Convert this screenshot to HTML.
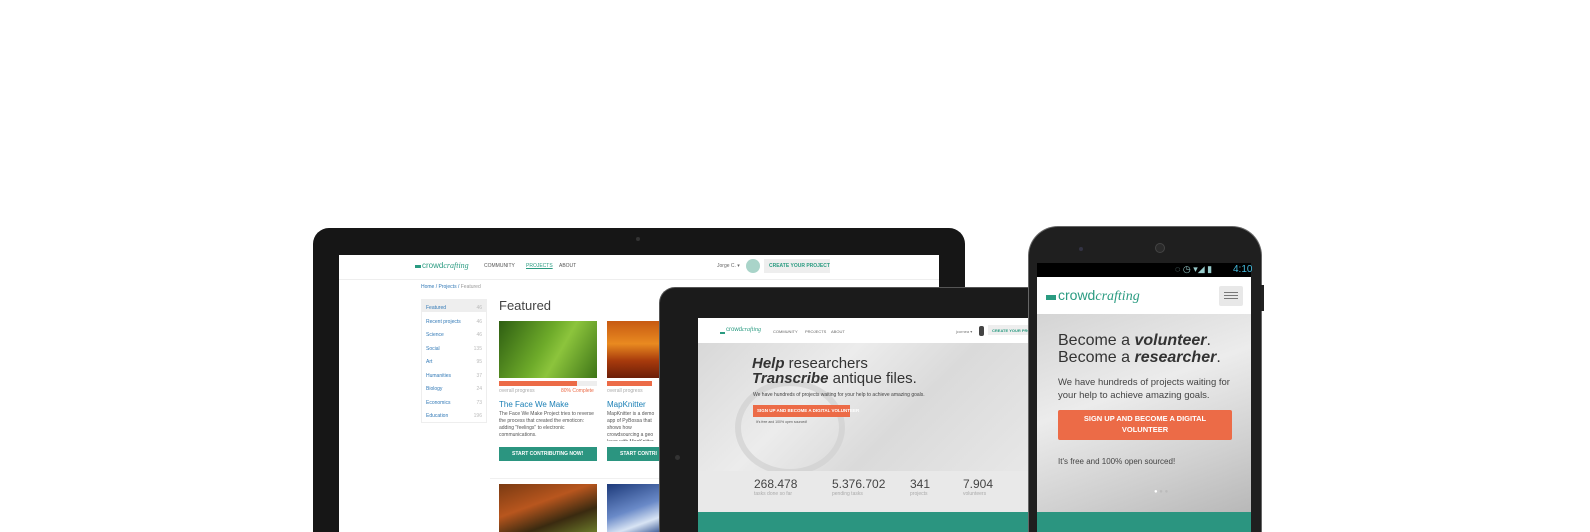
<!DOCTYPE html>
<html><head><meta charset="utf-8"><style>
*{margin:0;padding:0;box-sizing:border-box}
html,body{width:1590px;height:532px;overflow:hidden}
body{background:#fff;position:relative;font-family:"Liberation Sans",sans-serif}
.a{position:absolute}
.t{position:absolute;white-space:nowrap}
.logo{color:#2a9b81;font-size:8px}
.logo i{font-family:"Liberation Serif",serif}
</style></head><body>

<!-- LAPTOP -->
<div class="a" style="left:313px;top:228px;width:652px;height:304px;background:#161616;border-radius:16px 16px 0 0"></div>
<div class="a" style="left:636px;top:237px;width:4px;height:4px;border-radius:50%;background:#333"></div>
<div class="a" style="left:339px;top:255px;width:600px;height:277px;background:#fff"></div>
<div class="a" style="left:339px;top:279px;width:600px;height:1px;background:#eee"></div>
<div class="a" style="left:415px;top:265px;width:6px;height:3px;background:#2a9b81"></div>
<div class="t logo" style="left:422px;top:261px">crowd<i>crafting</i></div>
<div class="t" style="left:484px;top:263px;font-size:5px;color:#555">COMMUNITY</div>
<div class="t" style="left:526px;top:263px;font-size:5px;color:#2a9b81;text-decoration:underline">PROJECTS</div>
<div class="t" style="left:559px;top:263px;font-size:5px;color:#555">ABOUT</div>
<div class="t" style="left:717px;top:263px;font-size:5px;color:#666">Jorge C. ▾</div>
<div class="a" style="left:746px;top:259px;width:14px;height:14px;border-radius:50%;background:#a9d4c9"></div>
<div class="a" style="left:764px;top:259px;width:66px;height:14px;background:#eee"></div>
<div class="t" style="left:769px;top:263px;font-size:5px;color:#2a9b81;font-weight:bold">CREATE YOUR PROJECT</div>
<div class="t" style="left:421px;top:284px;font-size:5px;color:#337ab7">Home / Projects / <span style="color:#999">Featured</span></div>
<div class="a" style="left:421px;top:299px;width:66px;height:124px;border:1px solid #eee"></div>
<div class="a" style="left:422px;top:300px;width:64px;height:12px;background:#eee"></div>
<div class="a" style="left:426px;top:302px;font-size:5px;color:#337ab7;line-height:13.5px;width:56px">
<div>Featured<span style="float:right;color:#bbb">46</span></div><div>Recent projects<span style="float:right;color:#bbb">46</span></div><div>Science<span style="float:right;color:#bbb">46</span></div><div>Social<span style="float:right;color:#bbb">135</span></div><div>Art<span style="float:right;color:#bbb">95</span></div><div>Humanities<span style="float:right;color:#bbb">37</span></div><div>Biology<span style="float:right;color:#bbb">24</span></div><div>Economics<span style="float:right;color:#bbb">73</span></div><div>Education<span style="float:right;color:#bbb">196</span></div></div>
<div class="t" style="left:499px;top:298px;font-size:13px;color:#444">Featured</div>
<div class="a" style="left:499px;top:321px;width:98px;height:57px;background:linear-gradient(120deg,#2e5e12,#6eab2a 45%,#8cc43c 60%,#3d7417)"></div>
<div class="a" style="left:607px;top:321px;width:60px;height:57px;background:linear-gradient(180deg,#c75a12,#e98a20 40%,#a73a0c 70%,#6b1e08)"></div>
<div class="a" style="left:499px;top:381px;width:98px;height:5px;background:#eee"></div>
<div class="a" style="left:499px;top:381px;width:78px;height:5px;background:#ec6b47"></div>
<div class="a" style="left:607px;top:381px;width:45px;height:5px;background:#ec6b47"></div>
<div class="t" style="left:499px;top:388px;font-size:5px;color:#aaa">overall progress</div>
<div class="t" style="left:561px;top:388px;font-size:5px;color:#ec6b47">80% Complete</div>
<div class="t" style="left:607px;top:388px;font-size:5px;color:#aaa">overall progress</div>
<div class="t" style="left:499px;top:400px;font-size:8px;color:#1a7fb5">The Face We Make</div>
<div class="t" style="left:607px;top:400px;font-size:8px;color:#1a7fb5">MapKnitter</div>
<div class="a" style="left:499px;top:411px;width:98px;font-size:5px;line-height:7px;color:#555">The Face We Make Project tries to reverse the process that created the emoticon: adding "feelings" to electronic communications.</div>
<div class="a" style="left:607px;top:411px;width:52px;height:30px;overflow:hidden;font-size:5px;line-height:7px;color:#555">MapKnitter is a demo app of PyBossa that shows how crowdsourcing a geo layer with MapKnitter as the</div>
<div class="a" style="left:499px;top:447px;width:98px;height:14px;background:#2b9580"></div>
<div class="t" style="left:512px;top:451px;font-size:5px;color:#fff;font-weight:bold">START CONTRIBUTING NOW!</div>
<div class="a" style="left:607px;top:447px;width:60px;height:14px;background:#2b9580"></div>
<div class="t" style="left:620px;top:451px;font-size:5px;color:#fff;font-weight:bold">START CONTRI</div>
<div class="a" style="left:490px;top:478px;width:170px;height:1px;background:#f0f0f0"></div>
<div class="a" style="left:499px;top:484px;width:98px;height:48px;background:linear-gradient(160deg,#7a3a12,#b8561e 40%,#3a2a10 70%,#6b7a2a)"></div>
<div class="a" style="left:607px;top:484px;width:60px;height:48px;background:linear-gradient(160deg,#1d3a7a,#6a8ac8 50%,#d8e4f4 75%,#2a4a8a)"></div>

<!-- TABLET -->
<div class="a" style="left:659px;top:287px;width:400px;height:245px;background:#1b1b1b;border-radius:16px 0 0 0;border-top:1px solid #555;border-left:1px solid #555"></div>
<div class="a" style="left:675px;top:455px;width:5px;height:5px;border-radius:50%;background:#333"></div>
<div class="a" style="left:698px;top:318px;width:340px;height:214px;background:#fff"></div>
<div class="a" style="left:698px;top:343px;width:340px;height:128px;background:linear-gradient(135deg,#d8d8d8,#ececec 35%,#dadada 60%,#e8e8e8)"></div>
<div class="a" style="left:735px;top:380px;width:110px;height:95px;border-radius:50%;border:6px solid #d0d0d0;opacity:.7"></div>
<div class="a" style="left:698px;top:471px;width:340px;height:41px;background:#e9e9e9"></div>
<div class="a" style="left:698px;top:512px;width:340px;height:20px;background:#2b9580"></div>
<div class="a" style="left:720px;top:332px;width:5px;height:2px;background:#2a9b81"></div>
<div class="t logo" style="left:726px;top:327px;font-size:6px">crowd<i>crafting</i></div>
<div class="t" style="left:773px;top:329px;font-size:4px;color:#666">COMMUNITY</div>
<div class="t" style="left:805px;top:329px;font-size:4px;color:#666">PROJECTS</div>
<div class="t" style="left:831px;top:329px;font-size:4px;color:#666">ABOUT</div>
<div class="t" style="left:956px;top:329px;font-size:4px;color:#777">jcornea ▾</div>
<div class="a" style="left:979px;top:326px;width:5px;height:10px;background:#444;border-radius:2px"></div>
<div class="a" style="left:988px;top:325px;width:45px;height:10px;background:#eee"></div>
<div class="t" style="left:992px;top:328px;font-size:4px;color:#2a9b81;font-weight:bold">CREATE YOUR PROJECT</div>
<div class="t" style="left:752px;top:356px;font-size:15px;color:#333;line-height:15px"><b><i>Help</i></b> researchers<br><b><i>Transcribe</i></b> antique files.</div>
<div class="t" style="left:753px;top:392px;font-size:5px;color:#444">We have hundreds of projects waiting for your help to achieve amazing goals.</div>
<div class="a" style="left:753px;top:405px;width:97px;height:12px;background:#ec6b47"></div>
<div class="t" style="left:757px;top:408px;font-size:4.5px;color:#fff;font-weight:bold">SIGN UP AND BECOME A DIGITAL VOLUNTEER</div>
<div class="t" style="left:756px;top:420px;font-size:3.5px;color:#555">It's free and 100% open sourced!</div>
<div class="t" style="left:754px;top:477px;font-size:12px;color:#444">268.478</div>
<div class="t" style="left:754px;top:491px;font-size:5px;color:#aaa">tasks done so far</div>
<div class="t" style="left:832px;top:477px;font-size:12px;color:#444">5.376.702</div>
<div class="t" style="left:832px;top:491px;font-size:5px;color:#aaa">pending tasks</div>
<div class="t" style="left:910px;top:477px;font-size:12px;color:#444">341</div>
<div class="t" style="left:910px;top:491px;font-size:5px;color:#aaa">projects</div>
<div class="t" style="left:963px;top:477px;font-size:12px;color:#444">7.904</div>
<div class="t" style="left:963px;top:491px;font-size:5px;color:#aaa">volunteers</div>

<!-- PHONE -->
<div class="a" style="left:1028px;top:226px;width:234px;height:306px;background:#1f1f1f;border-radius:30px 30px 0 0;border:1px solid #666;border-bottom:none"></div>
<div class="a" style="left:1261px;top:285px;width:3px;height:26px;background:#222"></div>
<div class="a" style="left:1079px;top:247px;width:4px;height:4px;border-radius:50%;background:#334"></div>
<div class="a" style="left:1155px;top:243px;width:10px;height:10px;border-radius:50%;background:#2a2a2a;border:1px solid #444"></div>
<div class="a" style="left:1037px;top:263px;width:214px;height:14px;background:#000"></div>
<div class="t" style="left:1175px;top:264px;font-size:9px;color:#9cc">◌ ◷ ▾◢ ▮</div>
<div class="t" style="left:1233px;top:264px;font-size:10px;color:#4bd">4:10</div>
<div class="a" style="left:1037px;top:277px;width:214px;height:255px;background:#fff"></div>
<div class="a" style="left:1037px;top:314px;width:214px;height:198px;background:linear-gradient(160deg,#d4d4d4,#ececec 40%,#cfcfcf 75%,#b8b8b8)"></div>
<div class="a" style="left:1037px;top:512px;width:214px;height:20px;background:#2b9580"></div>
<div class="a" style="left:1046px;top:295px;width:10px;height:5px;background:#2a9b81"></div>
<div class="t logo" style="left:1058px;top:287px;font-size:14px">crowd<i>crafting</i></div>
<div class="a" style="left:1219px;top:286px;width:24px;height:20px;background:#e8e8e8;border-radius:2px"></div>
<div class="a" style="left:1224px;top:292px;width:14px;height:1px;background:#777;box-shadow:0 3px 0 #777,0 6px 0 #777"></div>
<div class="t" style="left:1058px;top:332px;font-size:16px;color:#333;line-height:17px">Become a <b><i>volunteer</i></b>.<br>Become a <b><i>researcher</i></b>.</div>
<div class="t" style="left:1058px;top:376px;font-size:9.5px;color:#444;line-height:13px">We have hundreds of projects waiting for<br>your help to achieve amazing goals.</div>
<div class="a" style="left:1058px;top:410px;width:174px;height:30px;background:#ec6b47;border-radius:2px;color:#fff;font-weight:bold;font-size:7.5px;text-align:center;line-height:10.5px;padding-top:4px">SIGN UP AND BECOME A DIGITAL<br>VOLUNTEER</div>
<div class="t" style="left:1058px;top:457px;font-size:8px;color:#444">It's free and 100% open sourced!</div>
<div class="t" style="left:1154px;top:489px;font-size:6px;color:#fff">● <span style="color:#bbb">● ●</span></div>
</body></html>
